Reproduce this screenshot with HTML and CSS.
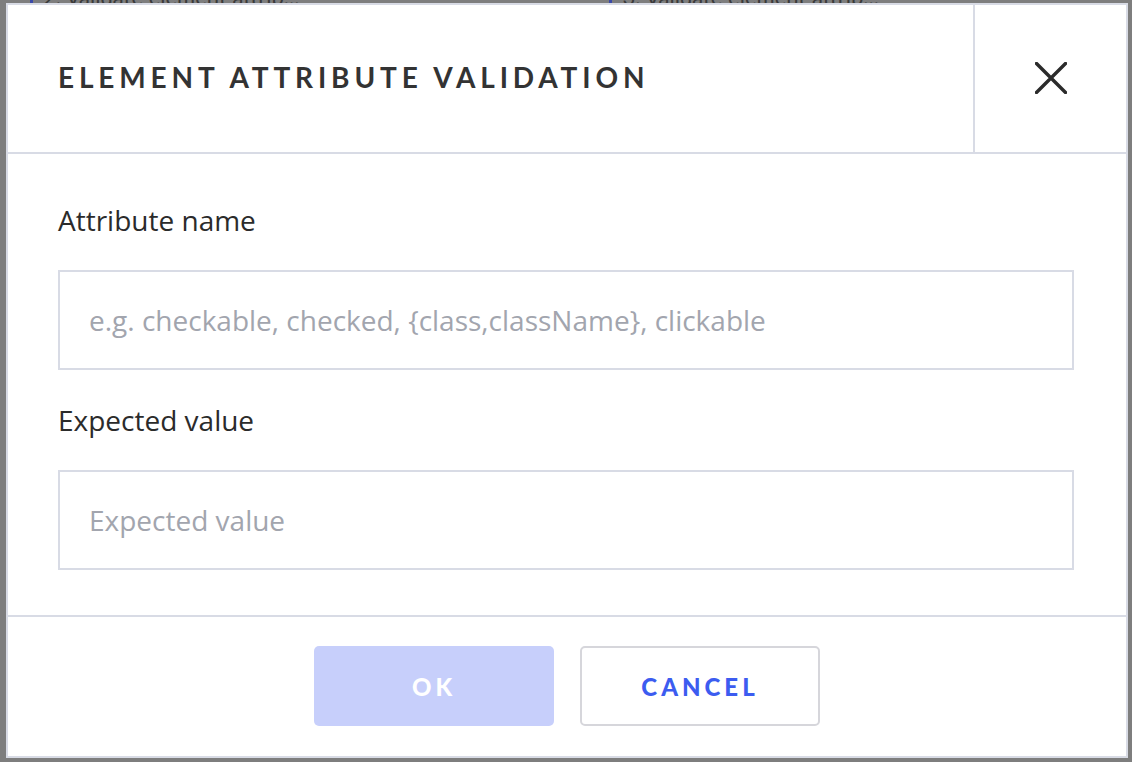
FILE: index.html
```html
<!DOCTYPE html>
<html lang="en">
<head>
<meta charset="utf-8">
<title>Element attribute validation</title>
<link rel="stylesheet" href="styles.css">
</head>
<body>
<div class="backdrop">
  <div class="behind">
    <span class="behind-mark"></span>
    <span class="behind-text">2. Validate element attrib...</span>
    <span class="behind-mark"></span>
    <span class="behind-text behind-text-2">3. Validate element attrib...</span>
  </div>
  <div class="dialog">
    <header class="dialog-header">
      <h1 class="dialog-title">ELEMENT ATTRIBUTE VALIDATION</h1>
      <button class="close-btn" aria-label="Close">
        <svg width="32" height="32" viewBox="0 0 32 32" aria-hidden="true">
          <path d="M1.5 1.5 L30.5 30.5 M30.5 1.5 L1.5 30.5" stroke="#2b2b2b" stroke-width="3.4" stroke-linecap="square" fill="none"/>
        </svg>
      </button>
    </header>
    <div class="dialog-body">
      <label class="field-label" for="attr">Attribute name</label>
      <input class="field-input" id="attr" type="text" placeholder="e.g. checkable, checked, {class,className}, clickable">
      <label class="field-label" for="exp">Expected value</label>
      <input class="field-input" id="exp" type="text" placeholder="Expected value">
    </div>
    <footer class="dialog-footer">
      <button class="btn btn-ok" disabled>OK</button>
      <button class="btn btn-cancel">CANCEL</button>
    </footer>
  </div>
</div>
</body>
</html>
```
FILE: styles.css
```css
* { box-sizing: border-box; }
html, body { margin: 0; padding: 0; }
body {
  background: #7e7e7e;
  font-family: "Open Sans", Lato, sans-serif;
  width: 1132px;
  height: 762px;
  overflow: hidden;
}
.backdrop {
  position: relative;
  width: 1132px;
  height: 762px;
  padding: 3px 4px 4px 6px;
}
.behind {
  position: absolute;
  top: -17px;
  left: 30px;
  display: flex;
  align-items: center;
  gap: 10px;
  font-family: Lato, sans-serif;
  font-size: 22px;
  color: #3a3a3a;
  white-space: nowrap;
}
.behind-mark { width: 3px; height: 22px; background: #3b4aa8; }
.behind-text { margin-right: 300px; }
.behind-text-2 { margin-right: 0; }
.dialog {
  position: relative;
  width: 1122px;
  height: 755px;
  background: #fff;
  border: 2px solid #d8dbe5;
  display: flex;
  flex-direction: column;
}
.dialog-header {
  display: flex;
  height: 149px;
  border-bottom: 2px solid #d8dbe5;
  flex-shrink: 0;
}
.dialog-title {
  flex: 1;
  margin: 0;
  padding: 0 0 3px 50px;
  display: flex;
  align-items: center;
  font-family: Lato, sans-serif;
  font-size: 28px;
  font-weight: 700;
  letter-spacing: 4.85px;
  color: #333333;
}
.close-btn {
  width: 153px;
  border: 0;
  border-left: 2px solid #d8dbe5;
  background: #fff;
  display: flex;
  align-items: center;
  justify-content: center;
  padding: 0 0 2px;
  cursor: pointer;
}
.dialog-body {
  flex: 1;
  display: flex;
  flex-direction: column;
  padding: 51px 52px 0 50px;
}
.field-label {
  font-size: 28px;
  line-height: 30px;
  color: #2b2b2b;
  margin-bottom: 35px;
}
.field-input {
  height: 100px;
  border: 2px solid #d8dbe5;
  border-radius: 0;
  padding: 0 29px;
  font-family: inherit;
  font-size: 28px;
  color: #2b2b2b;
  margin-bottom: 35px;
  outline: none;
}
.field-input::placeholder { color: #a2a5ae; }
.dialog-footer {
  height: 141px;
  border-top: 2px solid #d8dbe5;
  display: flex;
  justify-content: center;
  align-items: flex-start;
  gap: 26px;
  padding-top: 29px;
  flex-shrink: 0;
}
.btn {
  width: 240px;
  height: 80px;
  border-radius: 5px;
  font-family: Lato, sans-serif;
  font-size: 24px;
  font-weight: 900;
  letter-spacing: 4px;
  cursor: pointer;
}
.btn-ok {
  background: #c7cffb;
  border: 0;
  color: #fff;
}
.btn-cancel {
  background: #fff;
  border: 2px solid #d6d6db;
  color: #3c5cf0;
}
```
